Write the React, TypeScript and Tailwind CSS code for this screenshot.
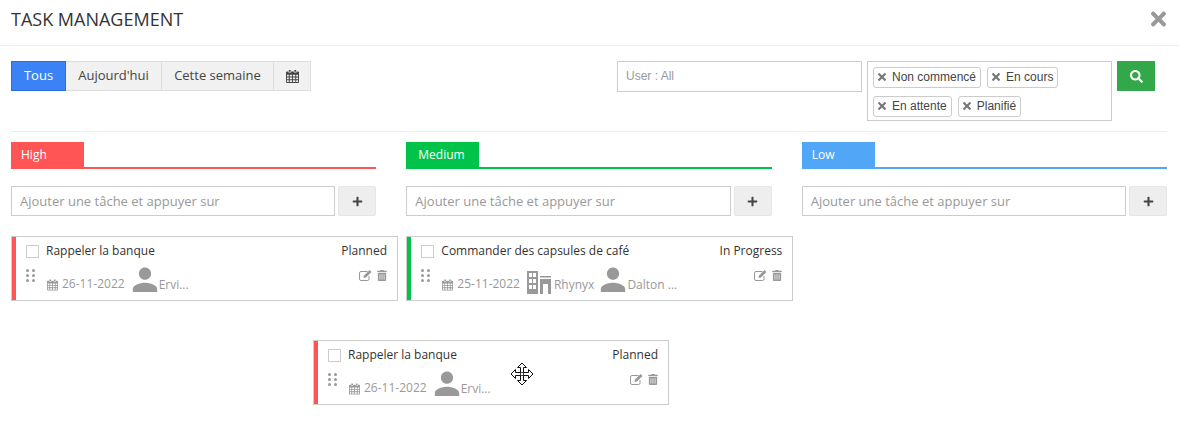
import { FaPlus, FaSearch, FaTimes, FaTrashAlt } from "react-icons/fa";
import { IoMdPerson } from "react-icons/io";

const CalendarIcon = ({ className }: { className?: string }) => (
  <svg viewBox="0 0 14 14" className={className} fill="currentColor">
    <path d="M3 0h2v2H3zM9 0h2v2H9z" />
    <path
      fillRule="evenodd"
      d="M1 1.500h1.500v1.200h3V1.500h3v1.200h3V1.500H13a1 1 0 0 1 1 1V13a1 1 0 0 1-1 1H1a1 1 0 0 1-1-1V2.500a1 1 0 0 1 1-1zM1 5v2h2V5zm3 0v2h2.500V5zm3.500 0v2H10V5zM11 5v2h2V5zM1 8v2h2V8zm3 0v2h2.500V8zm3.500 0v2H10V8zM11 8v2h2V8zM1 11v2h2v-2zm3 0v2h2.500v-2zm3.500 0v2H10v-2zM11 11v2h2v-2z"
    />
  </svg>
);

const BuildingIcon = () => (
  <svg viewBox="0 0 24 23" className="w-[24px] h-[23px] text-[#999]" fill="currentColor">
    <path
      fillRule="evenodd"
      d="M0 0h11v23H0zM2 2v4h3V2zm4 0v4h3V2zM2 8v4h3V8zm4 0v4h3V8zM2 14v4h3v-4zm4 0v4h3v-4z"
    />
    <path d="M13 5h11v1.500H13z" />
    <path fillRule="evenodd" d="M13 8h11v15h-3v-10h-5v10h-3z" />
  </svg>
);

const EditIcon = () => (
  <svg viewBox="0 0 13 12" className="w-[13px] h-[12px] text-[#999]" fill="none" stroke="currentColor">
    <path d="M8.500 2.500H2a1.500 1.500 0 0 0-1.500 1.500v6A1.500 1.500 0 0 0 2 11.500h6.500A1.500 1.500 0 0 0 10 10V7" />
    <path d="M4.500 9l.5-2.500L10.500 1 12.500 3 7 8.500z" fill="currentColor" stroke="none" />
  </svg>
);

const MoveCursor = () => (
  <svg viewBox="0 0 24 24" className="w-[24px] h-[24px]">
    <path
      d="M12 1l4.500 4.500h-3V10.500h5v-3L23 12l-4.500 4.500v-3h-5v5h3L12 23l-4.500-4.500h3v-5h-5v3L1 12l4.500-4.500v3h5v-5h-3z"
      fill="#fff"
      stroke="#111"
      strokeWidth="1"
      strokeLinejoin="round"
    />
    <path d="M10.500 10.500v3M13.500 10.500v3M10.500 10.500h3M10.500 13.500h3" stroke="#111" strokeWidth="0.800" fill="none" />
  </svg>
);

const DragHandle = () => (
  <div className="grid grid-cols-2 gap-x-[3px] gap-y-[2px] w-[9px]">
    {[0, 1, 2, 3, 4, 5].map((i) => (
      <span key={i} className="w-[3px] h-[3px] rounded-full bg-[#999]" />
    ))}
  </div>
);

interface Assignee {
  kind: "user" | "company";
  label: string;
}

interface TaskCardProps {
  title: string;
  status: string;
  date: string;
  bar: string;
  people: Assignee[];
  width: string;
}

const TaskCard = ({ title, status, date, bar, people, width }: TaskCardProps) => (
  <div className={`${width} h-[65px] border border-[#ccc] bg-white flex`}>
    <div className={`w-[4px] h-full ${bar}`} />
    <div className="flex-1 relative pl-[10px] pr-[10px] pt-[6px] min-w-0">
      <div className="flex items-center h-[16px]">
        <span className="w-[13px] h-[13px] border border-[#ccc] bg-white" />
        <span className="ml-[7px] text-[12px] text-[#333] leading-[16px]">{title}</span>
        <span className="ml-auto text-[12px] text-[#333] leading-[16px]">{status}</span>
      </div>
      <div className="flex mt-[9px]">
        <div className="mt-[1px]">
          <DragHandle />
        </div>
        <div className="ml-[12px] mt-[-3px] flex items-end h-[30px] text-[12px] text-[#999] leading-[16px]">
          <CalendarIcon className="w-[11px] h-[12px] mb-[4px] mr-[4px]" />
          <span className="mb-[3px]">{date}</span>
          {people.map((p) =>
            p.kind === "user" ? (
              <span key={p.label} className="flex items-end ml-[7px]">
                <IoMdPerson className="w-[26px] h-[26px] mb-[-1px] scale-125 origin-bottom" />
                <span className="ml-[1px] mb-[2px] whitespace-nowrap">{p.label}</span>
              </span>
            ) : (
              <span key={p.label} className="flex items-end ml-[7px] mb-[1px]">
                <BuildingIcon />
                <span className="ml-[3px] mb-[1px] mr-[-1px] whitespace-nowrap">{p.label}</span>
              </span>
            )
          )}
        </div>
        <div className="ml-auto flex items-center gap-[5px] h-[12px] mt-[1px] text-[#999]">
          <EditIcon />
          <FaTrashAlt className="w-[10px] h-[11px]" />
        </div>
      </div>
    </div>
  </div>
);

const AddTask = () => (
  <div className="flex mt-[17px] h-[30px]">
    <input
      readOnly
      placeholder="Ajouter une tâche et appuyer sur"
      className="flex-1 min-w-0 border border-[#ccc] pl-[8px] pr-[8px] pt-[2px] text-[13px] bg-white placeholder:text-[#999] outline-none"
    />
    <button className="ml-[3px] w-[38px] border border-[#e6e6e6] rounded-[2px] bg-[#eee] flex items-center justify-center text-[#444]">
      <FaPlus className="w-[11px] h-[11px]" />
    </button>
  </div>
);

const columns = [
  {
    name: "High",
    tab: "bg-[#ff5555]",
    line: "border-[#ff5555]",
    pad: "pl-[10px]",
    task: {
      title: "Rappeler la banque",
      status: "Planned",
      date: "26-11-2022",
      bar: "bg-[#ff5555]",
      people: [{ kind: "user", label: "Ervi..." }] as Assignee[],
    },
  },
  {
    name: "Medium",
    tab: "bg-[#00c34a]",
    line: "border-[#00c34a]",
    pad: "pl-[12px]",
    task: {
      title: "Commander des capsules de café",
      status: "In Progress",
      date: "25-11-2022",
      bar: "bg-[#00c34a]",
      people: [
        { kind: "company", label: "Rhynyx" },
        { kind: "user", label: "Dalton ..." },
      ] as Assignee[],
    },
  },
  { name: "Low", tab: "bg-[#52a6f7]", line: "border-[#52a6f7]", pad: "pl-[10px]" },
];

const filters = ["Tous", "Aujourd'hui", "Cette semaine"];
const filterWidths = ["w-[55px]", "w-[96px]", "w-[112px]"];
const statusTags = ["Non commencé", "En cours", "En attente", "Planifié"];

export default function App() {
  return (
    <div className="relative w-[1179px] h-[434px] bg-white overflow-hidden font-['Open_Sans',sans-serif]">
      <div className="h-[46px] border-b border-[#eee] flex items-center justify-between pl-[11px] pr-[12px] pb-[8px]">
        <h1 className="text-[18px] text-[#333] leading-[22px]">TASK MANAGEMENT</h1>
        <FaTimes className="w-[17px] h-[22px] text-[#999]" />
      </div>

      <div className="ml-[11px] mr-[12px] mt-[15px] h-[71px] border-b border-[#eee] flex items-start justify-between">
        <div className="flex h-[30px] text-[13px] text-[#444]">
          {filters.map((label, i) => (
            <button
              key={label}
              className={`${filterWidths[i]} border ${
                i === 0
                  ? "bg-[#3b82f6] border-[#2a6fdc] text-white"
                  : "bg-[#f1f1f1] border-[#ddd] border-l-0"
              }`}
            >
              {label}
            </button>
          ))}
          <button className="w-[37px] border border-l-0 border-[#ddd] bg-[#f1f1f1] flex items-center justify-center">
            <CalendarIcon className="w-[13px] h-[13px]" />
          </button>
        </div>

        <div className="flex items-start mr-[12px] font-['Liberation_Sans',sans-serif]">
          <div className="w-[245px] h-[31px] border border-[#ccc] pl-[8px] text-[12px] leading-[28px] text-[#999]">
            User : All
          </div>
          <div className="ml-[5px] w-[245px] h-[60px] border border-[#ccc] pl-[5px] pt-[5px] flex flex-wrap gap-x-[6px] gap-y-[8px] content-start">
            {statusTags.map((tag) => (
              <span
                key={tag}
                className="h-[21px] border border-[#ccc] rounded-[3px] px-[4px] pb-[1px] flex items-center text-[12px] text-[#444]"
              >
                <FaTimes className="w-[8px] h-[12px] text-[#777] mr-[6px]" />
                {tag}
              </span>
            ))}
          </div>
          <button className="ml-[5px] w-[38px] h-[30px] bg-[#32a84a] flex items-center justify-center text-white">
            <FaSearch className="w-[13px] h-[13px]" />
          </button>
        </div>
      </div>

      <div className="ml-[11px] mr-[12px] mt-[10px] grid grid-cols-3 gap-x-[30px]">
        {columns.map((col) => (
          <div key={col.name}>
            <div className={`h-[27px] border-b-2 ${col.line}`}>
              <div className={`w-[73px] h-[25px] ${col.tab} ${col.pad} text-[12px] leading-[25px] text-white`}>
                {col.name}
              </div>
            </div>
            <AddTask />
            {col.task && (
              <div className="mt-[20px]">
                <TaskCard {...col.task} width="w-[387px]" />
              </div>
            )}
          </div>
        ))}
      </div>

      {/* card being dragged */}
      <div className="absolute left-[313px] top-[340px]">
        <TaskCard
          title="Rappeler la banque"
          status="Planned"
          date="26-11-2022"
          bar="bg-[#ff5555]"
          people={[{ kind: "user", label: "Ervi..." }]}
          width="w-[356px]"
        />
      </div>
      <div className="absolute left-[510px] top-[362px]">
        <MoveCursor />
      </div>
    </div>
  );
}
